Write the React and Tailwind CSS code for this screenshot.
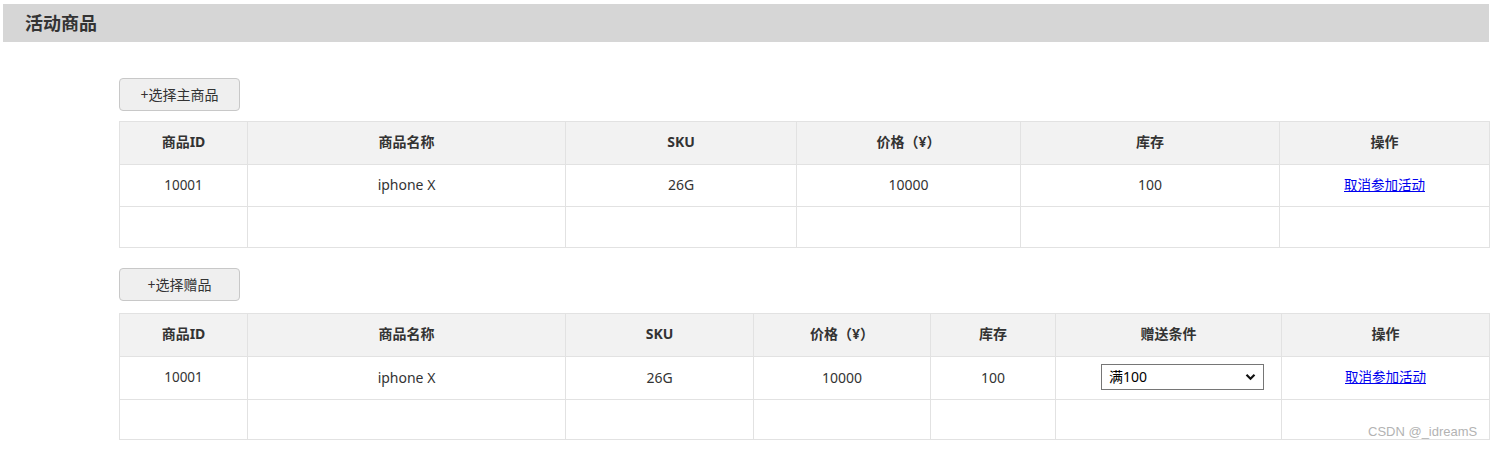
import React from "react";

const FONT = { fontFamily: '"Noto Sans", "Noto Sans CJK SC", sans-serif' };

const mainCols = [
  { title: "商品ID", w: 128 },
  { title: "商品名称", w: 318 },
  { title: "SKU", w: 231 },
  { title: "价格（¥）", w: 224 },
  { title: "库存", w: 259 },
  { title: "操作", w: 210 },
];

const giftCols = [
  { title: "商品ID", w: 128 },
  { title: "商品名称", w: 318 },
  { title: "SKU", w: 188 },
  { title: "价格（¥）", w: 177 },
  { title: "库存", w: 125 },
  { title: "赠送条件", w: 226 },
  { title: "操作", w: 208 },
];

function ActionButton({ children, className = "" }) {
  return (
    <button
      className={`block w-[121px] h-[33px] rounded-[4px] border border-[#c8c8c8] bg-[#efefef] text-[14px] text-[#333] leading-none ${className}`}
    >
      {children}
    </button>
  );
}

function CancelLink() {
  return (
    <a href="#" className="text-[13.5px] text-[#0000ee] underline">
      取消参加活动
    </a>
  );
}

function GoodsTable({ cols, row, rowH, lastH }) {
  return (
    <table className="table-fixed border-collapse w-[1371px] text-[#333]">
      <colgroup>
        {cols.map((c) => (
          <col key={c.title} style={{ width: c.w }} />
        ))}
      </colgroup>
      <thead>
        <tr className="h-[43px] bg-[#f2f2f2]">
          {cols.map((c) => (
            <th key={c.title} className="border border-[#e2e2e2] text-[14px] font-bold text-center leading-none pb-[2px]">
              {c.title}
            </th>
          ))}
        </tr>
      </thead>
      <tbody>
        <tr className={rowH}>
          {row.map((cell, i) => (
            <td key={i} className="border border-[#e2e2e2] text-center leading-none pb-[3px]">
              {cell}
            </td>
          ))}
        </tr>
        <tr className={lastH}>
          {cols.map((c) => (
            <td key={c.title} className="border border-[#e2e2e2]" />
          ))}
        </tr>
      </tbody>
    </table>
  );
}

function ConditionSelect() {
  return (
    <div className="relative w-[163px] h-[26px]">
      <select
        defaultValue="100"
        className="appearance-none w-full h-full border border-[#767676] bg-white text-[14px] text-black pl-[7px] rounded-none"
      >
        <option value="100">满100</option>
        <option value="200">满200</option>
        <option value="500">满500</option>
      </select>
      <svg
        className="absolute right-[8px] top-[9px] pointer-events-none"
        width="11"
        height="8"
        viewBox="0 0 11 8"
      >
        <path d="M1.5 1.8 L5.5 5.8 L9.5 1.8" fill="none" stroke="#111" strokeWidth="2.2" />
      </svg>
    </div>
  );
}

export default function App() {
  const mainRow = [
    <span className="text-[13.5px]">10001</span>,
    <span className="text-[14px]">iphone X</span>,
    <span className="text-[14px]">26G</span>,
    <span className="text-[14px]">10000</span>,
    <span className="text-[14px]">100</span>,
    <CancelLink />,
  ];

  const giftRow = [
    <span className="text-[13.5px]">10001</span>,
    <span className="text-[14px]">iphone X</span>,
    <span className="text-[14px]">26G</span>,
    <span className="text-[14px]">10000</span>,
    <span className="text-[14px]">100</span>,
    <div className="flex justify-start pl-[45px] pt-[1px]">
      <ConditionSelect />
    </div>,
    <CancelLink />,
  ];

  return (
    <div className="relative w-[1492px] h-[449px] bg-white overflow-hidden" style={FONT}>
      <div className="mx-[3px] mt-[4px] h-[38px] bg-[#d6d6d6] flex items-center pl-[22px]">
        <h2 className="text-[18px] font-bold text-[#333] leading-none">活动商品</h2>
      </div>

      <div className="pl-[119px] pt-[36px]">
        <ActionButton>+选择主商品</ActionButton>
        <div className="mt-[10px]">
          <GoodsTable cols={mainCols} row={mainRow} rowH="h-[42px]" lastH="h-[41px]" />
        </div>

        <ActionButton className="mt-[20px]">+选择赠品</ActionButton>
        <div className="mt-[12px]">
          <GoodsTable cols={giftCols} row={giftRow} rowH="h-[43px]" lastH="h-[40px]" />
        </div>
      </div>

      <span
        className="absolute left-[1368px] top-[425px] text-[13px] text-[#b3b3b3] leading-none"
        style={{ fontFamily: '"Liberation Sans", Arial, sans-serif' }}
      >
        CSDN @_idreamS
      </span>
    </div>
  );
}
